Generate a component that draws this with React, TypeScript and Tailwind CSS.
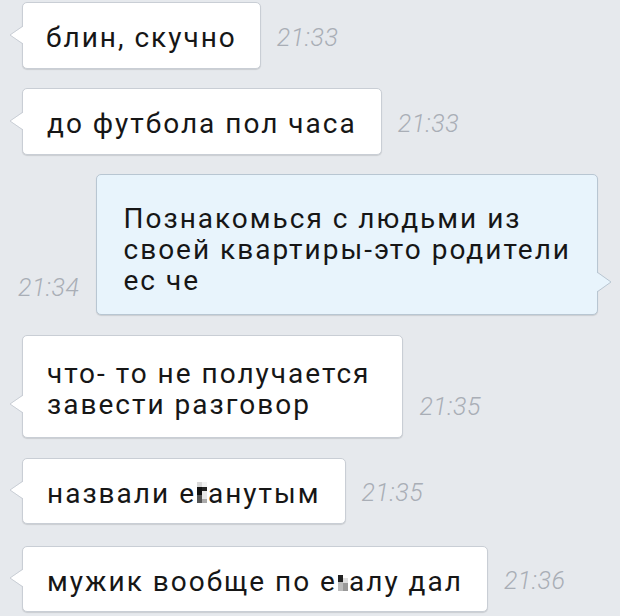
import React from "react";

type Msg = {
  lines: React.ReactNode[];
  time: string;
  out?: boolean;
  pad: string;
  row: string;
};

// pixelated blur over a censored letter
const Censor = ({ variant }: { variant: 1 | 2 }) => (
  <span className="inline-flex mx-[1px]">
    {variant === 1 ? (
      <>
        <span className="w-[5px] h-[21px] bg-[linear-gradient(to_bottom,#d8d8d8_0_25%,#111_25%_60%,#555_60%_100%)]" />
        <span className="w-[5px] h-[21px] bg-[linear-gradient(to_bottom,#f2f2f2_0_25%,#222_25%_45%,#e8e8e8_45%_80%,#aaa_80%_100%)]" />
      </>
    ) : (
      <>
        <span className="w-[5px] h-[21px] bg-[linear-gradient(to_bottom,#fff_0_25%,#222_25%_55%,#bbb_55%_100%)]" />
        <span className="w-[5px] h-[21px] bg-[linear-gradient(to_bottom,#fff_0_40%,#ddd_40%_60%,#999_60%_100%)]" />
      </>
    )}
  </span>
);

const messages: Msg[] = [
  { lines: ["блин, скучно"], time: "21:33", pad: "pt-[19px] pb-[15px] px-[23px]", row: "" },
  { lines: ["до футбола пол часа"], time: "21:33", pad: "pt-[19px] pb-[15px] px-[24px]", row: "" },
  {
    lines: ["Познакомься с людьми из", "своей квартиры-это родители", "ес че"],
    time: "21:34",
    out: true,
    pad: "pt-[28px] pb-[18px] pl-[26px] pr-[26px]",
    row: "",
  },
  {
    lines: ["что- то не получается", "завести разговор"],
    time: "21:35",
    pad: "pt-[22px] pb-[17px] pl-[24px] pr-[32px]",
    row: "mt-[1px]",
  },
  {
    lines: [
      <>
        назвали е<Censor variant={1} />анутым
      </>,
    ],
    time: "21:35",
    pad: "pt-[19px] pb-[14px] px-[24px]",
    row: "mt-[1px]",
  },
  {
    lines: [
      <>
        мужик вообще по е<Censor variant={2} />алу дал
      </>,
    ],
    time: "21:36",
    pad: "pt-[19px] pb-[14px] px-[24px]",
    row: "mt-[3px]",
  },
];

const Time = ({ t, out }: { t: string; out?: boolean }) => (
  <span
    className={
      "text-[25px] leading-[28px] font-light italic text-[#a9aeb6] tracking-[0.5px] " +
      (out ? "mb-[13px]" : "mb-[17px]")
    }
  >
    {t}
  </span>
);

const Bubble = ({ m }: { m: Msg }) => (
  <div
    className={
      "relative rounded-[5px] border shadow-[0_1px_1px_rgba(0,0,0,0.12)] " +
      m.pad +
      " " +
      (m.out ? "bg-[#e8f4fc] border-[#b8c6d2]" : "bg-white border-[#c9ced5]")
    }
  >
    {m.lines.map((l, i) => (
      <div key={i} className="whitespace-nowrap text-[28px] leading-[31px] tracking-[2px] text-[#161616]">
        {l}
      </div>
    ))}
    {m.out ? (
      <svg className="absolute right-[-15px] bottom-[22px]" width="16" height="20" viewBox="0 0 16 20">
        <polygon points="0,0 15,10 0,20" fill="#e8f4fc" />
        <polyline points="1,0 15,10 1,20" fill="none" stroke="#b8c6d2" strokeWidth="1" />
      </svg>
    ) : (
      <svg className="absolute left-[-14px] bottom-[24px]" width="15" height="18" viewBox="0 0 15 18">
        <polygon points="15,0 1,9 15,18" fill="#ffffff" />
        <polyline points="14,0 1,9 14,18" fill="none" stroke="#c9ced5" strokeWidth="1" />
      </svg>
    )}
  </div>
);

export default function App() {
  return (
    <div
      className="w-[620px] h-[616px] overflow-hidden bg-[#e6e9ed] pt-[2px] flex flex-col gap-[19px]"
      style={{ fontFamily: "Roboto, 'Noto Sans', sans-serif" }}
    >
      {messages.map((m, i) =>
        m.out ? (
          <div key={i} className={"flex items-end justify-end gap-[17px] pr-[22px] " + m.row}>
            <Time t={m.time} out />
            <Bubble m={m} />
          </div>
        ) : (
          <div key={i} className={"flex items-end gap-[16px] pl-[22px] " + m.row}>
            <Bubble m={m} />
            <Time t={m.time} />
          </div>
        )
      )}
    </div>
  );
}
